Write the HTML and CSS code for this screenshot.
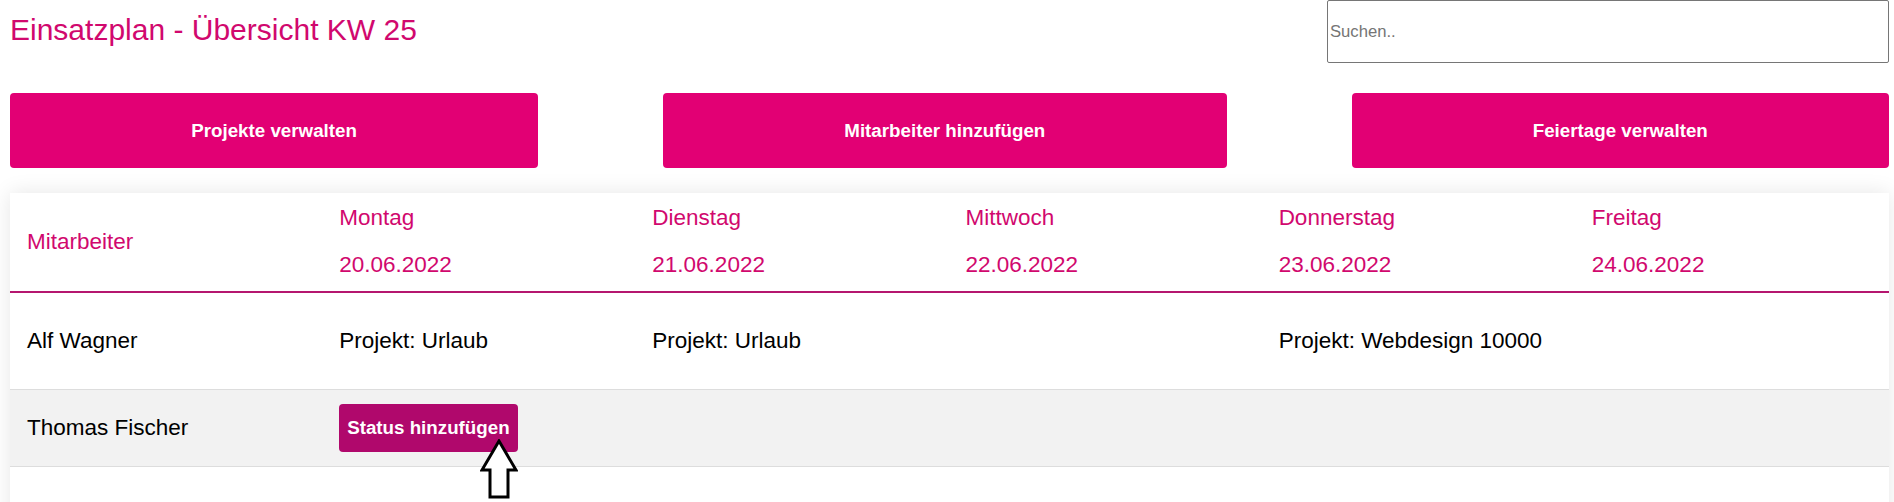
FILE: index.html
```html
<!DOCTYPE html>
<html lang="de">
<head>
<meta charset="utf-8">
<title>Einsatzplan</title>
<link rel="stylesheet" href="styles.css">
</head>
<body>
<div class="page">
  <header class="topbar">
    <h1 class="title">Einsatzplan - Übersicht KW 25</h1>
    <input class="search" type="text" placeholder="Suchen..">
  </header>

  <nav class="actions">
    <button class="action-btn">Projekte verwalten</button>
    <button class="action-btn">Mitarbeiter hinzufügen</button>
    <button class="action-btn">Feiertage verwalten</button>
  </nav>

  <section class="card">
    <table class="plan">
      <thead>
        <tr>
          <th class="name-head">Mitarbeiter</th>
          <th><div class="day">Montag</div><div class="date">20.06.2022</div></th>
          <th><div class="day">Dienstag</div><div class="date">21.06.2022</div></th>
          <th><div class="day">Mittwoch</div><div class="date">22.06.2022</div></th>
          <th><div class="day">Donnerstag</div><div class="date">23.06.2022</div></th>
          <th><div class="day">Freitag</div><div class="date">24.06.2022</div></th>
        </tr>
      </thead>
      <tbody>
        <tr class="row-plain">
          <td>Alf Wagner</td>
          <td>Projekt: Urlaub</td>
          <td>Projekt: Urlaub</td>
          <td></td>
          <td>Projekt: Webdesign 10000</td>
          <td></td>
        </tr>
        <tr class="row-hover">
          <td>Thomas Fischer</td>
          <td>
            <span class="status-wrap">
              <button class="status-btn">Status hinzufügen</button>
              <svg class="pointer" width="38" height="60" viewBox="0 0 38 60" aria-hidden="true">
                <polygon points="19,2 36,31 28,31 28,58 10,58 10,31 2,31" fill="#fff" stroke="#000" stroke-width="3" stroke-linejoin="miter"/>
              </svg>
            </span>
          </td>
          <td></td>
          <td></td>
          <td></td>
          <td></td>
        </tr>
      </tbody>
    </table>
  </section>
</div>
</body>
</html>
```

FILE: styles.css
```css
* { box-sizing: border-box; }

html, body {
  margin: 0;
  background: #fff;
  font-family: "Liberation Sans", Arial, sans-serif;
}

.page {
  padding: 0 5px 0 10px;
}

.topbar {
  display: flex;
  justify-content: space-between;
  align-items: flex-start;
  height: 63px;
}

.title {
  margin: 13px 0 0;
  font-size: 30px;
  font-weight: normal;
  line-height: 34px;
  color: #d1086e;
}

.search {
  width: 562px;
  height: 63px;
  margin: 0;
  padding: 0 2px;
  border: 1px solid #767676;
  border-radius: 2px;
  font-family: "Liberation Sans", Arial, sans-serif;
  font-size: 16.67px;
  color: #222;
  background: #fff;
}

.search::placeholder {
  color: #757575;
}

.actions {
  display: flex;
  gap: 125px;
  margin-top: 30px;
}

.action-btn {
  flex: 1 1 auto;
  height: 75px;
  padding: 0 20px;
  border: none;
  border-radius: 4px;
  background: #e20074;
  color: #fff;
  font-family: "Liberation Sans", Arial, sans-serif;
  font-weight: bold;
  font-size: 18.75px;
}

.card {
  margin-top: 25px;
  background: #fff;
  box-shadow: 0 0 20px rgba(0, 0, 0, 0.1);
  padding-bottom: 60px;
}

.plan {
  width: 100%;
  border-collapse: collapse;
  table-layout: fixed;
  font-size: 22.5px;
}

.plan th {
  text-align: left;
  font-weight: normal;
  color: #d1086e;
  padding: 12px 16px 13px 16px;
  line-height: 26px;
  vertical-align: middle;
  border-bottom: 2px solid #b5166f;
}

.plan th.name-head {
  padding-left: 17px;
}

.date {
  margin-top: 21px;
}

.plan td {
  color: #000;
  line-height: 26px;
  padding: 0 16px;
  vertical-align: middle;
  border-bottom: 1px solid #dddddd;
}

.plan td:first-child {
  padding-left: 17px;
}

.row-plain td {
  padding-top: 35px;
  padding-bottom: 35px;
}

.row-hover td {
  background: #f2f2f2;
  padding-top: 14px;
  padding-bottom: 14px;
}

.status-wrap {
  position: relative;
  display: inline-block;
  vertical-align: middle;
}

.status-btn {
  display: block;
  height: 48px;
  padding: 0 8px;
  border: none;
  border-radius: 4px;
  background: #b0086c;
  color: #fff;
  font-family: "Liberation Sans", Arial, sans-serif;
  font-weight: bold;
  font-size: 18.75px;
}

.pointer {
  position: absolute;
  left: 141px;
  top: 35px;
}
```
